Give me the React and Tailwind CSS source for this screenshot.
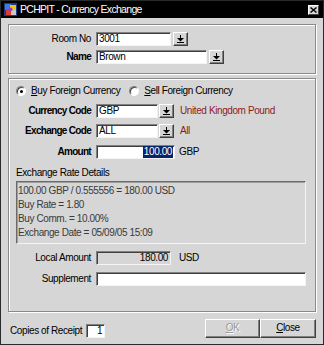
import React from "react";

const DropBtn = ({ ml = "ml-[2px]" }) => (
  <div className={`${ml} flex h-[14px] w-[15px] items-center justify-center border border-t-white border-l-white border-r-[#404040] border-b-[#404040] bg-[#d6d6d6] shadow-[inset_-1px_-1px_0_#808080]`}>
    <svg width="7" height="8" viewBox="0 0 7 8">
      <rect x="3" y="0" width="1" height="3" fill="#000" />
      <polygon points="0,3 7,3 3.5,6.5" fill="#000" />
      <rect x="0" y="7" width="7" height="1" fill="#000" />
    </svg>
  </div>
);

const Input = ({ w, children, className = "bg-white" }) => (
  <div
    className={`flex h-[14px] shrink-0 items-center border border-t-[#808080] border-l-[#808080] border-r-[#f4f4f4] border-b-[#f4f4f4] shadow-[inset_1px_1px_0_#404040] px-[2px] ${className}`}
    style={{ width: w }}
  >
    {children}
  </div>
);

const Label = ({ children, bold }) => (
  <div
    className={`w-[87px] shrink-0 pr-[5px] text-right ${bold ? "font-bold tracking-[-0.7px]" : ""}`}
  >
    {children}
  </div>
);

const Radio = ({ checked }) => (
  <div className="relative h-[10px] w-[10px] rounded-full border border-t-[#808080] border-l-[#808080] border-r-white border-b-white bg-white shadow-[inset_1px_1px_0_#404040]">
    {checked && (
      <div className="absolute left-[2.5px] top-[2.5px] h-[3px] w-[3px] rounded-full bg-black" />
    )}
  </div>
);

export default function App() {
  return (
    <div className="h-[345px] w-[324px] overflow-hidden border border-[#2a2a2a] bg-[#d6d6d6] font-['Liberation_Sans',Arial,sans-serif] text-[10px] leading-[12px] tracking-[-0.4px] text-black">
      {/* Title bar */}
      <div className="flex h-[17px] items-center bg-black pl-[3px] pr-[4px]">
        <svg width="13" height="13" viewBox="0 0 13 13" className="shrink-0">
          <rect x="0" y="0" width="13" height="13" fill="#1a3a8a" />
          <rect x="1" y="1" width="6" height="6" fill="#3b7de0" />
          <rect x="6" y="2" width="6" height="5" fill="#f2c21a" />
          <rect x="2" y="6" width="5" height="6" fill="#e23a2a" />
          <rect x="7" y="7" width="5" height="5" fill="#c9c9c9" />
          <circle cx="6.5" cy="6.5" r="2" fill="#9a3ad0" />
        </svg>
        <div className="ml-[3px] text-[10.5px] leading-[13px] tracking-[-0.7px] text-white">
          PCHPIT - Currency Exchange
        </div>
        <div className="ml-auto flex h-[10px] w-[11px] items-center justify-center border border-t-white border-l-white border-r-[#404040] border-b-[#404040] bg-[#d6d6d6]">
          <svg width="7" height="6" viewBox="0 0 7 6">
            <path d="M0.5 0.5 L6.5 5.5 M6.5 0.5 L0.5 5.5" stroke="#000" strokeWidth="1.4" />
          </svg>
        </div>
      </div>

      <div className="px-[7px]">
        {/* Top group */}
        <div className="mt-[6px] flex h-[50px] flex-col gap-[4px] border border-[#8a8a8a] pt-[7px] shadow-[inset_1px_1px_0_#fff,1px_1px_0_#fff]">
          <div className="flex items-center">
            <Label>Room No</Label>
            <Input w={75}>3001</Input>
            <DropBtn />
          </div>
          <div className="flex items-center">
            <Label bold>Name</Label>
            <Input w={111}>Brown</Input>
            <DropBtn />
          </div>
        </div>

        {/* Second group */}
        <div className="mt-[4px] flex h-[234px] flex-col border border-[#8a8a8a] pl-[7px] pr-[9px] shadow-[inset_1px_1px_0_#fff,1px_1px_0_#fff]">
          <div className="mt-[6px] flex items-center">
            <Radio checked />
            <div className="ml-[5px]">
              <span className="underline">B</span>uy Foreign Currency
            </div>
            <div className="ml-[9px]">
              <Radio />
            </div>
            <div className="ml-[5px]">
              <span className="underline">S</span>ell Foreign Currency
            </div>
          </div>

          <div className="-ml-[7px] mt-[7px] flex items-center">
            <Label bold>Currency Code</Label>
            <Input w={62}>GBP</Input>
            <DropBtn ml="ml-[1px]" />
            <div className="ml-[6px] text-[#8e1b1b]">United Kingdom Pound</div>
          </div>
          <div className="-ml-[7px] mt-[6px] flex items-center">
            <Label bold>Exchange Code</Label>
            <Input w={62}>ALL</Input>
            <DropBtn ml="ml-[1px]" />
            <div className="ml-[6px] text-[#8e1b1b]">All</div>
          </div>
          <div className="-ml-[7px] mt-[7px] flex items-center">
            <Label bold>Amount</Label>
            <Input w={79} className="justify-end bg-white !px-[1px]">
              <span className="bg-[#0a246a] px-[1px] text-white">100.00</span>
            </Input>
            <div className="ml-[4px]">GBP</div>
          </div>

          <div className="mt-[8px]">Exchange Rate Details</div>
          <div className="mt-[2px] flex h-[63px] flex-col gap-[2px] border border-t-[#6a6a6a] border-l-[#6a6a6a] border-r-[#f4f4f4] border-b-[#f4f4f4] pl-[1px] pt-[3px] shadow-[inset_1px_1px_0_#a0a0a0] text-[#3a3a3a]">
            <div>100.00 GBP / 0.555556 = 180.00 USD</div>
            <div>Buy Rate = 1.80</div>
            <div>Buy Comm. = 10.00%</div>
            <div>Exchange Date = 05/09/05 15:09</div>
          </div>

          <div className="-ml-[7px] mt-[7px] flex items-center">
            <Label>Local Amount</Label>
            <Input w={75} className="justify-end bg-[#d6d6d6]">180.00</Input>
            <div className="ml-[8px]">USD</div>
          </div>
          <div className="-ml-[7px] mt-[7px] flex items-center">
            <Label>Supplement</Label>
            <Input w={210} className="bg-white" />
          </div>
        </div>

        {/* Bottom */}
        <div className="mt-[6px] flex items-center">
          <div className="ml-[2px] mt-[6px] flex items-center">
            <div>Copies of Receipt</div>
            <Input w={19} className="ml-[4px] justify-end bg-white">1</Input>
          </div>
          <div className="ml-auto flex">
            <div className="flex h-[19px] w-[55px] items-center justify-center border border-t-white border-l-white border-r-[#404040] border-b-[#404040] shadow-[inset_-1px_-1px_0_#808080] text-[#9a9a9a] [text-shadow:1px_1px_0_#fff]">
              <span className="underline">O</span>K
            </div>
            <div className="flex h-[19px] w-[56px] items-center justify-center border border-t-white border-l-white border-r-[#404040] border-b-[#404040] shadow-[inset_-1px_-1px_0_#808080]">
              <span className="underline">C</span>lose
            </div>
          </div>
        </div>
      </div>
    </div>
  );
}
